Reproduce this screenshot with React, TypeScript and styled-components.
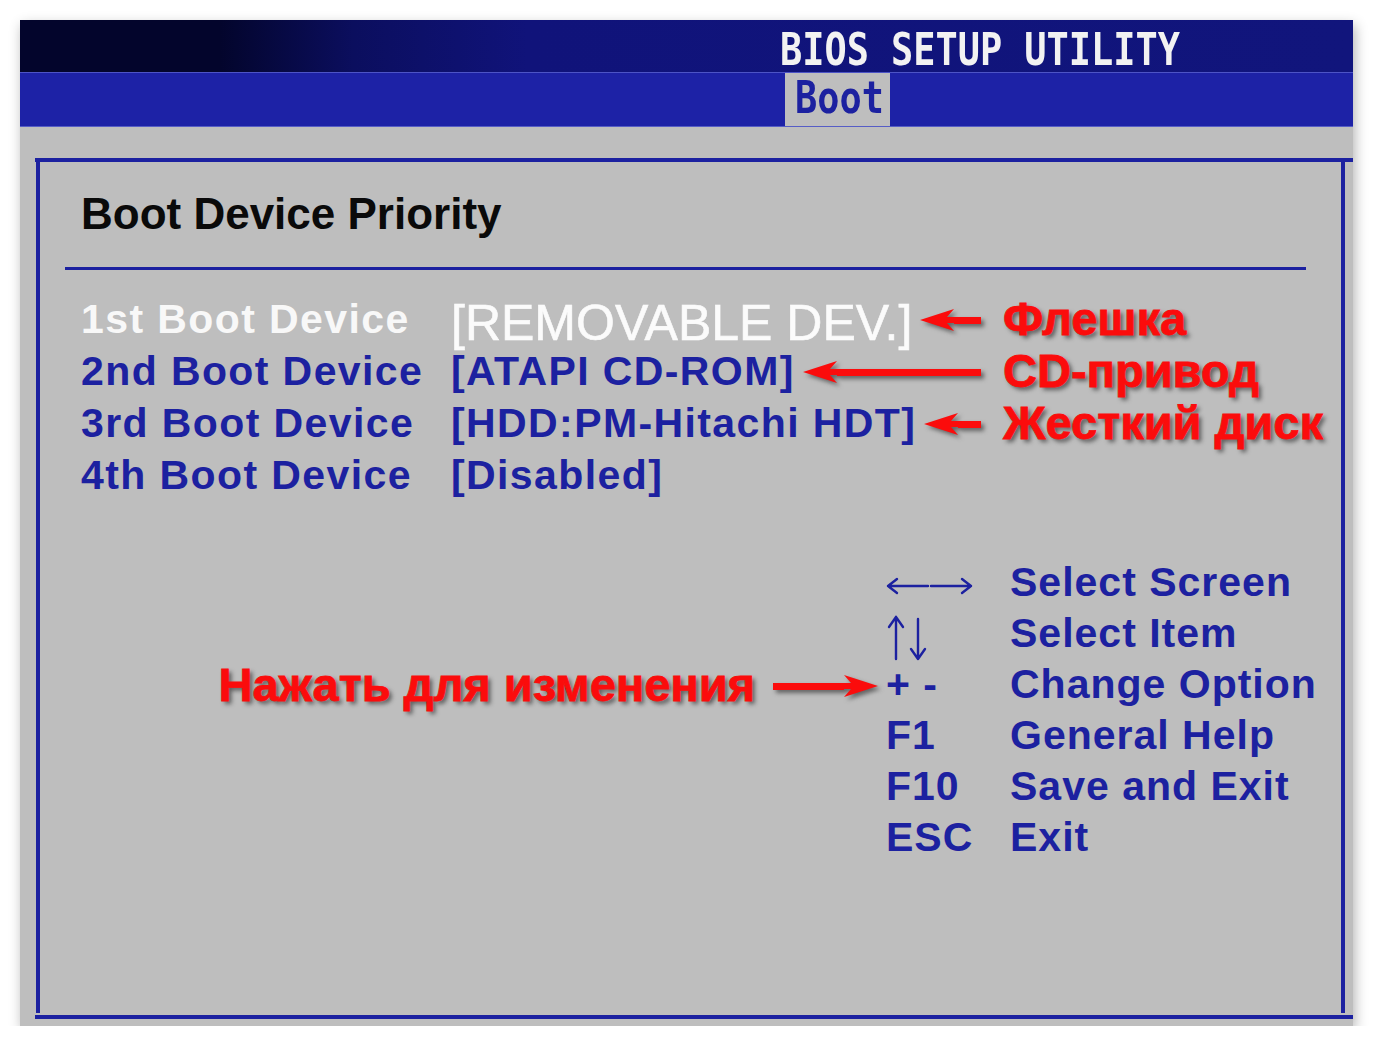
import React from 'react'
import styled, { createGlobalStyle } from 'styled-components'

const BIOS_BLUE = '#1c21a0'
const PANEL_GRAY = '#bebebe'
const NOTE_RED = '#fb0c0c'

const GlobalStyle = createGlobalStyle`
  * {
    box-sizing: border-box;
  }
  html,
  body {
    margin: 0;
    padding: 0;
    background: #ffffff;
  }
  body {
    font-family: 'Liberation Sans', Arial, sans-serif;
  }
`

const Page = styled.div`
  padding: 20px 0 0 20px;
`

const Screen = styled.div`
  width: 1333px;
  height: 1006px;
  display: flex;
  flex-direction: column;
  background: ${PANEL_GRAY};
  box-shadow: 2px 5px 12px rgba(0, 0, 0, 0.3);
`

const TitleBar = styled.div`
  height: 53px;
  padding: 7px 0 0 760px;
  border-bottom: 1px solid #4d54c6;
  background: linear-gradient(
    90deg,
    #03052c 0%,
    #03052c 15%,
    #0b0e5e 25%,
    #10137a 38%,
    #11157c 100%
  );
`

const PixelText = styled.span<{ $color: string }>`
  display: inline-block;
  font-family: 'DejaVu Sans Mono', 'Liberation Mono', monospace;
  font-size: 45px;
  line-height: 45px;
  font-weight: 700;
  color: ${p => p.$color};
  transform: scaleX(0.82);
  transform-origin: left center;
  white-space: nowrap;
`

const TabBar = styled.div`
  height: 54px;
  display: flex;
  background: #1d22a6;
  border-bottom: 1px solid #565dc6;
`

const Tab = styled.div`
  width: 105px;
  margin-left: 765px;
  padding: 2px 0 0 10px;
  background: ${PANEL_GRAY};
`

const Panel = styled.div`
  flex: 1;
  display: flex;
  margin: 31px 0 7px 15px;
  border-top: 4px solid ${BIOS_BLUE};
  border-bottom: 4px solid ${BIOS_BLUE};
`

const PanelInner = styled.div`
  flex: 1;
  margin: 0 8px 2px 1px;
  border-left: 4px solid ${BIOS_BLUE};
  border-right: 4px solid ${BIOS_BLUE};
`

const SectionTitle = styled.h1`
  margin: 30px 0 0 41px;
  font-size: 44px;
  line-height: 44px;
  font-weight: 700;
  color: #0a0a0a;
`

const Separator = styled.div`
  height: 3px;
  margin: 31px 35px 0 25px;
  background: ${BIOS_BLUE};
`

const DeviceList = styled.div`
  display: grid;
  grid-template-columns: 370px 530px 1fr;
  grid-auto-rows: 52px;
  margin-top: 23px;
  padding-left: 41px;
`

const DeviceLabel = styled.div<{ $active?: boolean }>`
  font-size: 41px;
  line-height: 52px;
  font-weight: 700;
  letter-spacing: 1.4px;
  color: ${p => (p.$active ? '#f8f8f8' : BIOS_BLUE)};
  white-space: nowrap;
`

const ValueCell = styled.div`
  display: flex;
  align-items: flex-start;
  gap: 8px;
`

const DeviceValue = styled.div<{ $active?: boolean }>`
  font-size: ${p => (p.$active ? 50 : 41)}px;
  line-height: 52px;
  font-weight: ${p => (p.$active ? 400 : 700)};
  letter-spacing: ${p => (p.$active ? 0 : 1.4)}px;
  margin-top: ${p => (p.$active ? 4 : 0)}px;
  color: ${p => (p.$active ? '#fbfbfb' : BIOS_BLUE)};
  -webkit-text-stroke: ${p => (p.$active ? '0.6px #fbfbfb' : '0')};
  white-space: nowrap;
`

const NoteArrow = styled.div<{ $dir: 'left' | 'right'; $width?: number }>`
  display: flex;
  flex-direction: ${p => (p.$dir === 'left' ? 'row' : 'row-reverse')};
  align-items: center;
  height: 24px;
  margin-top: 15px;
  ${p => (p.$width ? `width: ${p.$width}px; flex: none;` : 'flex: 1;')}
  filter: drop-shadow(3px 3px 2px rgba(40, 40, 40, 0.6));
`

const ArrowShaft = styled.div`
  flex: 1;
  height: 7px;
  background: ${NOTE_RED};
`

const NoteText = styled.div`
  padding-left: 22px;
  font-size: 47px;
  line-height: 52px;
  font-weight: 700;
  color: ${NOTE_RED};
  -webkit-text-stroke: 0.8px ${NOTE_RED};
  text-shadow: 3px 3px 4px rgba(30, 30, 30, 0.6);
  white-space: nowrap;
`

const HelpList = styled.div`
  display: grid;
  grid-template-columns: 846px 124px 1fr;
  grid-auto-rows: 51px;
  margin-top: 56px;
`

const HelpNote = styled.div`
  display: flex;
  justify-content: flex-end;
  align-items: flex-start;
  gap: 18px;
  padding-right: 8px;
`

const HelpNoteText = styled(NoteText)`
  padding-left: 0;
  line-height: 51px;
`

const HelpKey = styled.div`
  display: flex;
  align-items: flex-start;
  font-size: 41px;
  line-height: 51px;
  font-weight: 700;
  letter-spacing: 1px;
  color: ${BIOS_BLUE};
  white-space: nowrap;
`

const HelpText = styled.div`
  font-size: 41px;
  line-height: 51px;
  font-weight: 700;
  letter-spacing: 1px;
  color: ${BIOS_BLUE};
  white-space: nowrap;
`

const KeyGlyph = styled.svg<{ $top: number }>`
  display: block;
  margin-top: ${p => p.$top}px;
  stroke: ${BIOS_BLUE};
  stroke-width: 2.4;
  fill: none;
  stroke-linecap: round;
  stroke-linejoin: round;
`

function ArrowHead({ dir }: { dir: 'left' | 'right' }) {
  return (
    <svg width="34" height="24" viewBox="0 0 34 24" style={{ display: 'block', flex: 'none' }}>
      <polygon
        points="0,12 34,1 27,9 34,9 34,15 27,15 34,23"
        fill={NOTE_RED}
        transform={dir === 'right' ? 'translate(34 0) scale(-1 1)' : undefined}
      />
    </svg>
  )
}

function Arrow({ dir, width }: { dir: 'left' | 'right'; width?: number }) {
  return (
    <NoteArrow $dir={dir} $width={width}>
      <ArrowHead dir={dir} />
      <ArrowShaft />
    </NoteArrow>
  )
}

// thin arrow glyphs of the key legend
function LeftRightKeys() {
  return (
    <KeyGlyph $top={19} width="88" height="20" viewBox="0 0 88 20">
      <path d="M2 10 H42 M2 10 L11 3 M2 10 L11 17" />
      <path d="M45 10 H85 M85 10 L76 3 M85 10 L76 17" />
    </KeyGlyph>
  )
}

function UpDownKeys() {
  return (
    <KeyGlyph $top={7} width="44" height="46" viewBox="0 0 44 46">
      <path d="M10 2 V44 M10 2 L3 12 M10 2 L17 12" />
      <path d="M32 4 V44 M32 44 L25 34 M32 44 L39 34" />
    </KeyGlyph>
  )
}

type HelpKeyName = 'leftright' | 'updown' | string

function KeyLabel({ name }: { name: HelpKeyName }) {
  if (name === 'leftright') return <LeftRightKeys />
  if (name === 'updown') return <UpDownKeys />
  return <>{name}</>
}

const devices = [
  { label: '1st Boot Device', value: '[REMOVABLE DEV.]', note: 'Флешка', active: true },
  { label: '2nd Boot Device', value: '[ATAPI CD-ROM]', note: 'CD-привод' },
  { label: '3rd Boot Device', value: '[HDD:PM-Hitachi HDT]', note: 'Жесткий диск' },
  { label: '4th Boot Device', value: '[Disabled]' },
]

const helpKeys = [
  { key: 'leftright', text: 'Select Screen' },
  { key: 'updown', text: 'Select Item' },
  { key: '+ -', text: 'Change Option', note: 'Нажать для изменения' },
  { key: 'F1', text: 'General Help' },
  { key: 'F10', text: 'Save and Exit' },
  { key: 'ESC', text: 'Exit' },
]

export default function App() {
  return (
    <Page>
      <GlobalStyle />
      <Screen>
        <TitleBar>
          <PixelText $color="#f2f2f2">BIOS SETUP UTILITY</PixelText>
        </TitleBar>
        <TabBar>
          <Tab>
            <PixelText $color={BIOS_BLUE}>Boot</PixelText>
          </Tab>
        </TabBar>
        <Panel>
          <PanelInner>
            <SectionTitle>Boot Device Priority</SectionTitle>
            <Separator />
            <DeviceList>
              {devices.map(d => (
                <React.Fragment key={d.label}>
                  <DeviceLabel $active={d.active}>{d.label}</DeviceLabel>
                  <ValueCell>
                    <DeviceValue $active={d.active}>{d.value}</DeviceValue>
                    {d.note && <Arrow dir="left" />}
                  </ValueCell>
                  <NoteText>{d.note}</NoteText>
                </React.Fragment>
              ))}
            </DeviceList>
            <HelpList>
              {helpKeys.map(h => (
                <React.Fragment key={h.key}>
                  <HelpNote>
                    {h.note && (
                      <>
                        <HelpNoteText>{h.note}</HelpNoteText>
                        <Arrow dir="right" width={105} />
                      </>
                    )}
                  </HelpNote>
                  <HelpKey>
                    <KeyLabel name={h.key} />
                  </HelpKey>
                  <HelpText>{h.text}</HelpText>
                </React.Fragment>
              ))}
            </HelpList>
          </PanelInner>
        </Panel>
      </Screen>
    </Page>
  )
}
